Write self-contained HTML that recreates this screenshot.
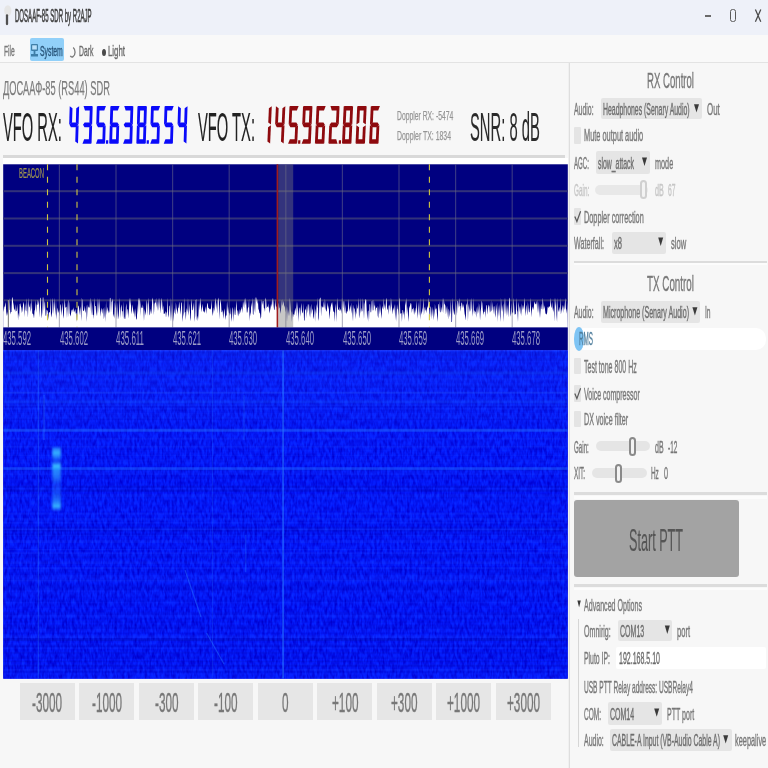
<!DOCTYPE html>
<html><head><meta charset="utf-8"><style>
html,body{margin:0;padding:0}
body{width:768px;height:768px;overflow:hidden;position:relative;background:#f7f7f7;font-family:"Liberation Sans",sans-serif}
.t{position:absolute;white-space:nowrap;line-height:1;transform-origin:0 0;-webkit-text-stroke-width:0.4px}
.r{position:absolute;box-sizing:border-box}
svg.r{box-sizing:content-box}
#wrap{position:absolute;left:0;top:0;width:768px;height:768px;overflow:hidden;background:#f7f7f7;filter:blur(0.35px)}
</style></head><body><div id="wrap">
<div class="r" style="left:0px;top:0px;width:768.00px;height:35.00px;background:#eef1f9;"></div>
<div class="r" style="left:0px;top:35px;width:768.00px;height:27.00px;background:#f9f9f9;"></div>
<div class="r" style="left:0px;top:61.5px;width:768.00px;height:1.50px;background:#e3e3e3;"></div>
<div class="r" style="left:568px;top:63px;width:1.20px;height:705.00px;background:#f0f0f0;"></div>
<div class="r" style="left:569.3px;top:63px;width:1.00px;height:705.00px;background:#dedede;"></div>
<svg class="r" style="left:0;top:0" width="40" height="35"><ellipse cx="7.8" cy="10.6" rx="3.6" ry="5.4" fill="#e6e6e6"/><path d="M7 15.5 L7 24" stroke="#505050" stroke-width="2.3" stroke-linecap="round"/></svg>
<div class="t" style="left:15.20px;top:8.00px;font-size:17.59px;transform:scaleX(0.3438);color:#404040;-webkit-text-stroke-width:0.6px;">DOSAAF-85 SDR by R2AJP</div>
<div class="r" style="left:704.5px;top:14.5px;width:6.30px;height:2.30px;background:#6a6a6a;"></div>
<div class="r" style="left:729.8px;top:9px;width:6.4px;height:13.2px;border:1.6px solid #5a5a5a;border-radius:2.5px"></div>
<svg class="r" style="left:754px;top:8px" width="8" height="15"><path d="M1.4 1.4 L6.8 13.8 M6.8 1.4 L1.4 13.8" stroke="#4a4a4a" stroke-width="1.25"/></svg>
<div class="t" style="left:4.40px;top:44.00px;font-size:14.83px;transform:scaleX(0.4522);color:#7a7a7a;">File</div>
<div class="r" style="left:30.1px;top:38.4px;width:33.90px;height:23.00px;background:#91d0f9;border-radius:2px;"></div>
<svg class="r" style="left:30px;top:43px" width="9" height="16"><rect x="1" y="1" width="7" height="7" rx="1" fill="#3f7fa8"/><rect x="2.2" y="2.3" width="4.6" height="4.2" fill="#b9e0fa"/><rect x="3.6" y="8" width="1.8" height="3" fill="#3f7fa8"/><rect x="1" y="11" width="7" height="2.5" fill="#3f7fa8"/></svg>
<div class="t" style="left:39.80px;top:44.00px;font-size:14.83px;transform:scaleX(0.4613);color:#28557a;">System</div>
<svg class="r" style="left:0;top:0" width="768" height="768"><path d="M73.2 47.6 C75.6 49.8 75.8 54.6 73 56.6 C72 57.3 70.8 57 70.4 55.8" fill="none" stroke="#7a7a7a" stroke-width="1.3"/></svg>
<div class="t" style="left:78.70px;top:44.00px;font-size:14.83px;transform:scaleX(0.4597);color:#6a6a6a;">Dark</div>
<div class="r" style="left:101.8px;top:48.8px;width:4px;height:7px;border-radius:50%;background:#4a4a4a"></div>
<div class="t" style="left:108.30px;top:44.00px;font-size:14.83px;transform:scaleX(0.5289);color:#6a6a6a;">Light</div>
<div class="t" style="left:3.10px;top:78.00px;font-size:20.93px;transform:scaleX(0.4443);color:#7c7c7c;-webkit-text-stroke-width:0.25px;">ДОСААФ-85 (RS44) SDR</div>
<div class="t" style="left:3.40px;top:108.00px;font-size:40.12px;transform:scaleX(0.3663);color:#222222;-webkit-text-stroke-width:0.15px;">VFO RX:</div>
<div class="t" style="left:197.50px;top:108.00px;font-size:40.12px;transform:scaleX(0.3671);color:#222222;-webkit-text-stroke-width:0.15px;">VFO TX:</div>
<div class="t" style="left:397.00px;top:109.00px;font-size:13.37px;transform:scaleX(0.5084);color:#959595;-webkit-text-stroke-width:0.25px;">Doppler RX: -5474</div>
<div class="t" style="left:397.20px;top:129.00px;font-size:13.37px;transform:scaleX(0.5174);color:#959595;-webkit-text-stroke-width:0.25px;">Doppler TX: 1834</div>
<div class="t" style="left:470.40px;top:108.00px;font-size:39.83px;transform:scaleX(0.3710);color:#2a2a2a;-webkit-text-stroke-width:0.1px;">SNR: 8 dB</div>
<svg class="r" style="left:0;top:0" width="768" height="768" fill="#0a0afa"><polygon points="69.73,106.20 72.47,108.27 72.04,122.48 69.18,124.55"/><polygon points="69.47,124.85 71.08,122.55 76.80,122.55 78.27,124.85 76.66,127.15 70.94,127.15"/><polygon points="79.13,106.20 78.58,124.55 75.84,122.48 76.27,108.27"/><polygon points="78.56,125.15 78.01,143.50 75.27,141.43 75.70,127.22"/><polygon points="83.59,105.90 92.39,105.90 90.71,110.50 84.99,110.50"/><polygon points="92.68,106.20 92.13,124.55 89.39,122.48 89.82,108.27"/><polygon points="83.02,124.85 84.63,122.55 90.35,122.55 91.82,124.85 90.21,127.15 84.49,127.15"/><polygon points="92.11,125.15 91.56,143.50 88.82,141.43 89.25,127.22"/><polygon points="84.13,139.20 89.85,139.20 91.25,143.80 82.45,143.80"/><polygon points="97.14,105.90 105.94,105.90 104.26,110.50 98.54,110.50"/><polygon points="96.83,106.20 99.57,108.27 99.14,122.48 96.28,124.55"/><polygon points="96.57,124.85 98.18,122.55 103.90,122.55 105.37,124.85 103.76,127.15 98.04,127.15"/><polygon points="105.66,125.15 105.11,143.50 102.37,141.43 102.80,127.22"/><polygon points="97.68,139.20 103.40,139.20 104.80,143.80 96.00,143.80"/><polygon points="106.06,140.20 108.26,140.20 108.15,143.80 105.95,143.80"/><polygon points="110.69,105.90 119.49,105.90 117.81,110.50 112.09,110.50"/><polygon points="110.38,106.20 113.12,108.27 112.69,122.48 109.83,124.55"/><polygon points="110.12,124.85 111.73,122.55 117.45,122.55 118.92,124.85 117.31,127.15 111.59,127.15"/><polygon points="109.81,125.15 112.55,127.22 112.12,141.43 109.26,143.50"/><polygon points="111.23,139.20 116.95,139.20 118.35,143.80 109.55,143.80"/><polygon points="119.21,125.15 118.66,143.50 115.92,141.43 116.35,127.22"/><polygon points="124.24,105.90 133.04,105.90 131.36,110.50 125.64,110.50"/><polygon points="133.33,106.20 132.78,124.55 130.04,122.48 130.47,108.27"/><polygon points="123.67,124.85 125.28,122.55 131.00,122.55 132.47,124.85 130.86,127.15 125.14,127.15"/><polygon points="132.76,125.15 132.21,143.50 129.47,141.43 129.90,127.22"/><polygon points="124.78,139.20 130.50,139.20 131.90,143.80 123.10,143.80"/><polygon points="137.79,105.90 146.59,105.90 144.91,110.50 139.19,110.50"/><polygon points="146.88,106.20 146.33,124.55 143.59,122.48 144.02,108.27"/><polygon points="146.31,125.15 145.76,143.50 143.02,141.43 143.45,127.22"/><polygon points="138.33,139.20 144.05,139.20 145.45,143.80 136.65,143.80"/><polygon points="136.91,125.15 139.65,127.22 139.22,141.43 136.36,143.50"/><polygon points="137.48,106.20 140.22,108.27 139.79,122.48 136.93,124.55"/><polygon points="137.22,124.85 138.83,122.55 144.55,122.55 146.02,124.85 144.41,127.15 138.69,127.15"/><polygon points="146.71,140.20 148.91,140.20 148.80,143.80 146.60,143.80"/><polygon points="151.34,105.90 160.14,105.90 158.46,110.50 152.74,110.50"/><polygon points="151.03,106.20 153.77,108.27 153.34,122.48 150.48,124.55"/><polygon points="150.77,124.85 152.38,122.55 158.10,122.55 159.57,124.85 157.96,127.15 152.24,127.15"/><polygon points="159.86,125.15 159.31,143.50 156.57,141.43 157.00,127.22"/><polygon points="151.88,139.20 157.60,139.20 159.00,143.80 150.20,143.80"/><polygon points="164.89,105.90 173.69,105.90 172.01,110.50 166.29,110.50"/><polygon points="164.58,106.20 167.32,108.27 166.89,122.48 164.03,124.55"/><polygon points="164.32,124.85 165.93,122.55 171.65,122.55 173.12,124.85 171.51,127.15 165.79,127.15"/><polygon points="173.41,125.15 172.86,143.50 170.12,141.43 170.55,127.22"/><polygon points="165.43,139.20 171.15,139.20 172.55,143.80 163.75,143.80"/><polygon points="178.13,106.20 180.87,108.27 180.44,122.48 177.58,124.55"/><polygon points="177.87,124.85 179.48,122.55 185.20,122.55 186.67,124.85 185.06,127.15 179.34,127.15"/><polygon points="187.53,106.20 186.98,124.55 184.24,122.48 184.67,108.27"/><polygon points="186.96,125.15 186.41,143.50 183.67,141.43 184.10,127.22"/></svg>
<svg class="r" style="left:0;top:0" width="768" height="768" fill="#8e0a0e"><polygon points="271.79,106.20 270.97,124.55 268.26,122.48 268.90,108.27"/><polygon points="270.94,125.15 270.11,143.50 267.41,141.43 268.05,127.22"/><polygon points="275.94,106.20 278.65,108.27 278.01,122.48 275.12,124.55"/><polygon points="275.40,124.85 277.05,122.55 282.77,122.55 284.20,124.85 282.56,127.15 276.84,127.15"/><polygon points="285.34,106.20 284.52,124.55 281.81,122.48 282.45,108.27"/><polygon points="284.49,125.15 283.66,143.50 280.96,141.43 281.60,127.22"/><polygon points="289.81,105.90 298.61,105.90 296.86,110.50 291.14,110.50"/><polygon points="289.49,106.20 292.20,108.27 291.56,122.48 288.67,124.55"/><polygon points="288.95,124.85 290.60,122.55 296.32,122.55 297.75,124.85 296.11,127.15 290.39,127.15"/><polygon points="298.04,125.15 297.21,143.50 294.51,141.43 295.15,127.22"/><polygon points="289.85,139.20 295.57,139.20 296.90,143.80 288.10,143.80"/><polygon points="298.21,140.20 300.41,140.20 300.25,143.80 298.05,143.80"/><polygon points="303.36,105.90 312.16,105.90 310.41,110.50 304.69,110.50"/><polygon points="312.44,106.20 311.62,124.55 308.91,122.48 309.55,108.27"/><polygon points="311.59,125.15 310.76,143.50 308.06,141.43 308.70,127.22"/><polygon points="303.40,139.20 309.12,139.20 310.45,143.80 301.65,143.80"/><polygon points="303.04,106.20 305.75,108.27 305.11,122.48 302.22,124.55"/><polygon points="302.50,124.85 304.15,122.55 309.87,122.55 311.30,124.85 309.66,127.15 303.94,127.15"/><polygon points="316.91,105.90 325.71,105.90 323.96,110.50 318.24,110.50"/><polygon points="316.59,106.20 319.30,108.27 318.66,122.48 315.77,124.55"/><polygon points="316.05,124.85 317.70,122.55 323.42,122.55 324.85,124.85 323.21,127.15 317.49,127.15"/><polygon points="315.74,125.15 318.45,127.22 317.81,141.43 314.91,143.50"/><polygon points="316.95,139.20 322.67,139.20 324.00,143.80 315.20,143.80"/><polygon points="325.14,125.15 324.31,143.50 321.61,141.43 322.25,127.22"/><polygon points="330.46,105.90 339.26,105.90 337.51,110.50 331.79,110.50"/><polygon points="339.54,106.20 338.72,124.55 336.01,122.48 336.65,108.27"/><polygon points="329.60,124.85 331.25,122.55 336.97,122.55 338.40,124.85 336.76,127.15 331.04,127.15"/><polygon points="329.29,125.15 332.00,127.22 331.36,141.43 328.46,143.50"/><polygon points="330.50,139.20 336.22,139.20 337.55,143.80 328.75,143.80"/><polygon points="338.86,140.20 341.06,140.20 340.90,143.80 338.70,143.80"/><polygon points="344.01,105.90 352.81,105.90 351.06,110.50 345.34,110.50"/><polygon points="353.09,106.20 352.27,124.55 349.56,122.48 350.20,108.27"/><polygon points="352.24,125.15 351.41,143.50 348.71,141.43 349.35,127.22"/><polygon points="344.05,139.20 349.77,139.20 351.10,143.80 342.30,143.80"/><polygon points="342.84,125.15 345.55,127.22 344.91,141.43 342.01,143.50"/><polygon points="343.69,106.20 346.40,108.27 345.76,122.48 342.87,124.55"/><polygon points="343.15,124.85 344.80,122.55 350.52,122.55 351.95,124.85 350.31,127.15 344.59,127.15"/><polygon points="357.56,105.90 366.36,105.90 364.61,110.50 358.89,110.50"/><polygon points="366.64,106.20 365.82,124.55 363.11,122.48 363.75,108.27"/><polygon points="365.79,125.15 364.96,143.50 362.26,141.43 362.90,127.22"/><polygon points="357.60,139.20 363.32,139.20 364.65,143.80 355.85,143.80"/><polygon points="356.39,125.15 359.10,127.22 358.46,141.43 355.56,143.50"/><polygon points="357.24,106.20 359.95,108.27 359.31,122.48 356.42,124.55"/><polygon points="371.11,105.90 379.91,105.90 378.16,110.50 372.44,110.50"/><polygon points="370.79,106.20 373.50,108.27 372.86,122.48 369.97,124.55"/><polygon points="370.25,124.85 371.90,122.55 377.62,122.55 379.05,124.85 377.41,127.15 371.69,127.15"/><polygon points="369.94,125.15 372.65,127.22 372.01,141.43 369.11,143.50"/><polygon points="371.15,139.20 376.87,139.20 378.20,143.80 369.40,143.80"/><polygon points="379.34,125.15 378.51,143.50 375.81,141.43 376.45,127.22"/></svg>
<div class="r" style="left:3.3px;top:155.3px;width:561.70px;height:3.10px;background:#d9d9d9;"></div>
<div class="r" style="left:3.3px;top:158.4px;width:564.70px;height:5.90px;background:#ffffff;"></div>
<svg class="r" style="left:0;top:0" width="768" height="768"><rect x="3.2" y="164.3" width="564.5999999999999" height="163.2" fill="#000080"/><rect x="3.2" y="190.2" width="564.5999999999999" height="2" fill="#32327a"/><rect x="3.2" y="217.5" width="564.5999999999999" height="2" fill="#32327a"/><rect x="3.2" y="244.8" width="564.5999999999999" height="2" fill="#32327a"/><rect x="3.2" y="272.1" width="564.5999999999999" height="2" fill="#32327a"/><rect x="3.2" y="299.3" width="564.5999999999999" height="2" fill="#32327a"/><polygon fill="#ffffff" points="3.20,327.50 3.20,306.71 3.75,312.08 4.30,306.92 4.85,306.29 5.40,301.99 5.95,307.01 6.50,316.28 7.05,311.47 7.60,315.76 8.15,310.24 8.70,311.26 9.25,309.80 9.80,297.50 10.35,314.49 10.90,312.04 11.45,311.99 12.00,297.50 12.55,297.50 13.10,302.27 13.65,305.22 14.20,310.64 14.75,308.18 15.30,312.15 15.85,304.00 16.40,310.66 16.95,311.26 17.50,303.87 18.05,320.52 18.60,312.40 19.15,316.88 19.70,304.16 20.25,303.32 20.80,306.09 21.35,307.76 21.90,312.92 22.45,310.24 23.00,305.37 23.55,301.80 24.10,304.86 24.65,317.05 25.20,302.84 25.75,310.21 26.30,311.49 26.85,298.07 27.40,308.84 27.95,317.64 28.50,297.50 29.05,306.25 29.60,307.76 30.15,302.78 30.70,311.98 31.25,308.06 31.80,298.25 32.35,314.29 32.90,313.19 33.45,315.12 34.00,318.58 34.55,311.04 35.10,309.33 35.65,299.41 36.20,312.81 36.75,304.22 37.30,305.33 37.85,299.65 38.40,301.73 38.95,304.78 39.50,317.52 40.05,297.50 40.60,298.30 41.15,310.18 41.70,318.60 42.25,312.55 42.80,297.50 43.35,297.50 43.90,311.00 44.45,303.35 45.00,300.66 45.55,315.34 46.10,316.21 46.65,309.60 47.20,310.22 47.75,311.54 48.30,319.66 48.85,312.83 49.40,312.13 49.95,312.33 50.50,297.52 51.05,317.47 51.60,315.19 52.15,312.21 52.70,297.50 53.25,304.06 53.80,314.40 54.35,297.50 54.90,307.21 55.45,315.64 56.00,299.32 56.55,319.77 57.10,312.36 57.65,307.45 58.20,310.77 58.75,313.05 59.30,309.34 59.85,316.52 60.40,303.87 60.95,305.60 61.50,315.79 62.05,308.69 62.60,302.34 63.15,315.13 63.70,318.76 64.25,305.39 64.80,298.84 65.35,307.56 65.90,307.46 66.45,306.41 67.00,318.33 67.55,301.31 68.10,317.32 68.65,299.62 69.20,302.99 69.75,312.92 70.30,316.40 70.85,314.51 71.40,310.92 71.95,309.50 72.50,309.57 73.05,312.53 73.60,307.27 74.15,310.44 74.70,312.51 75.25,308.51 75.80,313.85 76.35,312.46 76.90,322.00 77.45,310.77 78.00,305.51 78.55,305.89 79.10,308.41 79.65,314.97 80.20,306.14 80.75,311.20 81.30,321.36 81.85,297.50 82.40,300.63 82.95,310.21 83.50,311.29 84.05,310.17 84.60,305.48 85.15,313.09 85.70,310.47 86.25,304.85 86.80,322.00 87.35,310.99 87.90,304.62 88.45,307.80 89.00,306.92 89.55,308.06 90.10,297.50 90.65,305.09 91.20,315.56 91.75,300.32 92.30,308.03 92.85,315.17 93.40,314.49 93.95,318.94 94.50,297.50 95.05,306.03 95.60,306.11 96.15,312.86 96.70,316.14 97.25,297.50 97.80,316.12 98.35,298.37 98.90,313.28 99.45,298.06 100.00,309.73 100.55,316.86 101.10,307.45 101.65,309.84 102.20,314.08 102.75,309.49 103.30,307.88 103.85,319.23 104.40,315.84 104.95,306.44 105.50,322.00 106.05,300.47 106.60,314.90 107.15,306.64 107.70,309.43 108.25,313.44 108.80,310.06 109.35,312.97 109.90,297.81 110.45,297.93 111.00,312.80 111.55,301.76 112.10,301.31 112.65,298.21 113.20,317.36 113.75,313.73 114.30,318.81 114.85,301.94 115.40,308.51 115.95,300.52 116.50,313.86 117.05,319.63 117.60,302.27 118.15,319.42 118.70,315.42 119.25,307.26 119.80,297.50 120.35,318.35 120.90,307.83 121.45,304.28 122.00,311.30 122.55,311.37 123.10,318.99 123.65,301.36 124.20,316.45 124.75,318.91 125.30,318.67 125.85,307.24 126.40,303.29 126.95,315.63 127.50,309.31 128.05,309.37 128.60,318.47 129.15,306.66 129.70,297.50 130.25,305.79 130.80,297.50 131.35,314.23 131.90,310.72 132.45,304.22 133.00,308.43 133.55,314.33 134.10,309.05 134.65,317.79 135.20,308.07 135.75,315.78 136.30,318.94 136.85,319.77 137.40,303.80 137.95,314.66 138.50,297.50 139.05,300.92 139.60,297.50 140.15,315.98 140.70,299.88 141.25,308.41 141.80,307.15 142.35,308.30 142.90,304.36 143.45,310.14 144.00,321.04 144.55,308.81 145.10,312.22 145.65,315.50 146.20,307.11 146.75,299.68 147.30,304.61 147.85,316.02 148.40,297.50 148.95,304.32 149.50,315.55 150.05,314.05 150.60,308.55 151.15,314.14 151.70,309.66 152.25,300.25 152.80,297.55 153.35,304.03 153.90,314.96 154.45,304.54 155.00,302.18 155.55,303.10 156.10,297.78 156.65,307.68 157.20,300.24 157.75,311.05 158.30,297.50 158.85,310.79 159.40,304.01 159.95,297.50 160.50,313.57 161.05,306.57 161.60,297.50 162.15,302.37 162.70,310.54 163.25,305.29 163.80,313.96 164.35,313.73 164.90,313.16 165.45,310.79 166.00,317.84 166.55,313.12 167.10,311.66 167.65,297.50 168.20,314.78 168.75,317.67 169.30,306.42 169.85,305.21 170.40,322.00 170.95,297.50 171.50,311.78 172.05,322.00 172.60,302.01 173.15,313.33 173.70,321.70 174.25,307.66 174.80,312.43 175.35,314.82 175.90,302.16 176.45,307.88 177.00,310.55 177.55,314.28 178.10,308.26 178.65,307.13 179.20,301.39 179.75,305.99 180.30,314.74 180.85,309.21 181.40,302.53 181.95,302.61 182.50,322.00 183.05,316.48 183.60,312.96 184.15,297.50 184.70,312.85 185.25,311.86 185.80,320.29 186.35,311.49 186.90,308.03 187.45,312.16 188.00,297.50 188.55,315.73 189.10,310.77 189.65,303.59 190.20,317.78 190.75,321.17 191.30,298.68 191.85,303.84 192.40,310.54 192.95,309.78 193.50,305.71 194.05,301.68 194.60,322.00 195.15,315.76 195.70,300.14 196.25,299.08 196.80,320.42 197.35,315.42 197.90,321.25 198.45,314.17 199.00,302.40 199.55,310.32 200.10,297.50 200.65,303.26 201.20,308.09 201.75,312.16 202.30,303.41 202.85,307.63 203.40,311.71 203.95,311.14 204.50,312.97 205.05,309.96 205.60,306.23 206.15,314.02 206.70,308.85 207.25,302.72 207.80,304.12 208.35,308.50 208.90,307.73 209.45,309.60 210.00,308.50 210.55,309.73 211.10,307.56 211.65,299.69 212.20,311.45 212.75,315.88 213.30,311.54 213.85,307.18 214.40,311.63 214.95,301.74 215.50,297.50 216.05,308.92 216.60,301.99 217.15,313.68 217.70,300.91 218.25,297.50 218.80,301.22 219.35,319.55 219.90,305.83 220.45,298.91 221.00,303.16 221.55,312.15 222.10,311.98 222.65,309.74 223.20,318.89 223.75,313.45 224.30,308.35 224.85,312.68 225.40,320.08 225.95,315.30 226.50,315.67 227.05,300.92 227.60,307.46 228.15,313.61 228.70,306.42 229.25,315.98 229.80,312.67 230.35,314.86 230.90,307.01 231.45,322.00 232.00,317.18 232.55,306.99 233.10,309.13 233.65,322.00 234.20,306.10 234.75,314.62 235.30,315.36 235.85,308.55 236.40,300.33 236.95,309.81 237.50,311.02 238.05,316.41 238.60,313.98 239.15,308.67 239.70,314.48 240.25,312.28 240.80,309.94 241.35,308.89 241.90,306.80 242.45,313.30 243.00,301.12 243.55,304.10 244.10,308.53 244.65,298.25 245.20,305.45 245.75,297.50 246.30,303.72 246.85,312.48 247.40,312.46 247.95,308.12 248.50,306.88 249.05,298.58 249.60,321.29 250.15,312.11 250.70,316.15 251.25,302.32 251.80,307.20 252.35,297.50 252.90,313.96 253.45,315.05 254.00,297.50 254.55,308.14 255.10,312.91 255.65,297.50 256.20,297.50 256.75,301.04 257.30,304.10 257.85,298.68 258.40,308.72 258.95,310.25 259.50,312.94 260.05,313.41 260.60,319.02 261.15,316.65 261.70,299.32 262.25,304.96 262.80,301.08 263.35,300.96 263.90,307.93 264.45,308.54 265.00,311.93 265.55,297.50 266.10,299.84 266.65,308.34 267.20,307.10 267.75,306.32 268.30,308.06 268.85,303.18 269.40,313.41 269.95,310.98 270.50,307.89 271.05,303.80 271.60,307.28 272.15,297.50 272.70,301.63 273.25,308.76 273.80,297.97 274.35,309.90 274.90,309.53 275.45,298.86 276.00,306.75 276.55,306.30 277.10,311.72 277.65,312.78 278.20,308.25 278.75,302.54 279.30,307.49 279.85,308.04 280.40,313.64 280.95,310.56 281.50,303.44 282.05,299.02 282.60,305.89 283.15,303.32 283.70,300.72 284.25,307.69 284.80,305.06 285.35,309.24 285.90,312.16 286.45,305.61 287.00,322.00 287.55,306.25 288.10,316.21 288.65,309.35 289.20,316.31 289.75,297.50 290.30,303.24 290.85,310.23 291.40,312.72 291.95,322.00 292.50,310.76 293.05,317.46 293.60,313.87 294.15,315.13 294.70,312.07 295.25,307.41 295.80,312.06 296.35,300.95 296.90,316.77 297.45,301.38 298.00,310.24 298.55,322.00 299.10,306.94 299.65,308.64 300.20,316.64 300.75,308.68 301.30,302.85 301.85,310.31 302.40,312.57 302.95,313.47 303.50,303.09 304.05,320.77 304.60,320.17 305.15,308.63 305.70,310.38 306.25,305.50 306.80,318.40 307.35,303.57 307.90,313.22 308.45,305.14 309.00,303.64 309.55,313.53 310.10,317.84 310.65,308.43 311.20,303.76 311.75,314.18 312.30,308.15 312.85,310.67 313.40,319.16 313.95,316.42 314.50,304.86 315.05,322.00 315.60,308.52 316.15,314.00 316.70,303.97 317.25,308.19 317.80,297.50 318.35,321.01 318.90,318.06 319.45,299.99 320.00,297.96 320.55,297.50 321.10,316.73 321.65,305.28 322.20,308.08 322.75,306.31 323.30,307.65 323.85,300.88 324.40,308.67 324.95,298.43 325.50,308.00 326.05,310.66 326.60,311.77 327.15,306.88 327.70,302.17 328.25,309.62 328.80,305.11 329.35,319.46 329.90,313.87 330.45,307.69 331.00,305.20 331.55,303.58 332.10,301.94 332.65,306.03 333.20,310.56 333.75,312.11 334.30,312.48 334.85,322.00 335.40,303.57 335.95,308.59 336.50,322.00 337.05,297.50 337.60,304.85 338.15,309.69 338.70,309.58 339.25,311.36 339.80,306.83 340.35,311.06 340.90,308.87 341.45,313.90 342.00,297.50 342.55,302.30 343.10,308.48 343.65,301.28 344.20,301.19 344.75,312.89 345.30,303.95 345.85,312.94 346.40,313.72 346.95,310.65 347.50,312.06 348.05,307.77 348.60,298.64 349.15,308.29 349.70,311.68 350.25,304.79 350.80,307.80 351.35,313.74 351.90,302.35 352.45,312.98 353.00,321.54 353.55,304.62 354.10,309.53 354.65,307.45 355.20,319.28 355.75,310.71 356.30,314.78 356.85,303.67 357.40,308.39 357.95,308.43 358.50,297.50 359.05,318.59 359.60,314.80 360.15,297.50 360.70,313.71 361.25,307.58 361.80,311.64 362.35,311.07 362.90,298.01 363.45,307.02 364.00,318.95 364.55,304.48 365.10,301.34 365.65,298.98 366.20,299.95 366.75,310.85 367.30,320.35 367.85,311.51 368.40,310.22 368.95,322.00 369.50,304.86 370.05,303.78 370.60,312.20 371.15,312.34 371.70,301.40 372.25,300.31 372.80,310.54 373.35,310.23 373.90,299.35 374.45,307.08 375.00,304.70 375.55,311.72 376.10,307.68 376.65,307.90 377.20,306.03 377.75,315.87 378.30,318.24 378.85,305.93 379.40,314.42 379.95,303.20 380.50,309.00 381.05,313.75 381.60,319.10 382.15,305.82 382.70,307.98 383.25,309.87 383.80,298.01 384.35,308.61 384.90,303.77 385.45,311.10 386.00,300.59 386.55,297.50 387.10,308.77 387.65,310.32 388.20,304.66 388.75,314.72 389.30,306.59 389.85,304.26 390.40,311.84 390.95,297.52 391.50,303.76 392.05,308.35 392.60,314.44 393.15,307.36 393.70,310.66 394.25,303.91 394.80,310.61 395.35,320.14 395.90,303.70 396.45,322.00 397.00,303.99 397.55,308.62 398.10,309.71 398.65,315.67 399.20,299.84 399.75,297.50 400.30,312.74 400.85,314.07 401.40,312.87 401.95,322.00 402.50,309.93 403.05,310.28 403.60,315.00 404.15,311.08 404.70,320.15 405.25,299.83 405.80,305.87 406.35,297.50 406.90,314.19 407.45,305.89 408.00,314.97 408.55,322.00 409.10,308.46 409.65,306.72 410.20,305.00 410.75,302.63 411.30,304.09 411.85,312.97 412.40,308.76 412.95,308.96 413.50,307.29 414.05,314.90 414.60,311.96 415.15,307.51 415.70,313.15 416.25,307.44 416.80,300.43 417.35,318.69 417.90,311.76 418.45,301.80 419.00,316.05 419.55,310.91 420.10,297.55 420.65,319.77 421.20,310.83 421.75,314.74 422.30,309.88 422.85,307.45 423.40,297.66 423.95,315.30 424.50,308.71 425.05,306.49 425.60,310.96 426.15,309.05 426.70,313.23 427.25,305.90 427.80,308.24 428.35,297.50 428.90,305.54 429.45,313.23 430.00,317.86 430.55,305.95 431.10,307.65 431.65,319.58 432.20,306.22 432.75,313.64 433.30,320.25 433.85,308.78 434.40,317.09 434.95,303.53 435.50,309.95 436.05,307.96 436.60,309.30 437.15,316.41 437.70,322.00 438.25,303.84 438.80,304.47 439.35,311.98 439.90,301.11 440.45,311.98 441.00,312.50 441.55,306.56 442.10,312.22 442.65,297.65 443.20,313.82 443.75,297.69 444.30,303.62 444.85,304.61 445.40,305.69 445.95,314.51 446.50,309.07 447.05,305.72 447.60,312.30 448.15,319.57 448.70,308.54 449.25,311.06 449.80,317.18 450.35,310.37 450.90,299.51 451.45,322.00 452.00,322.00 452.55,297.50 453.10,308.23 453.65,311.42 454.20,315.26 454.75,313.18 455.30,306.59 455.85,301.12 456.40,309.22 456.95,315.73 457.50,300.87 458.05,301.31 458.60,308.33 459.15,297.50 459.70,306.68 460.25,305.44 460.80,311.66 461.35,303.59 461.90,302.33 462.45,305.74 463.00,308.15 463.55,303.85 464.10,308.58 464.65,313.75 465.20,316.80 465.75,320.43 466.30,303.02 466.85,305.56 467.40,297.50 467.95,321.80 468.50,303.43 469.05,308.27 469.60,312.16 470.15,298.99 470.70,311.75 471.25,308.32 471.80,297.50 472.35,310.54 472.90,316.86 473.45,297.50 474.00,314.15 474.55,309.96 475.10,311.82 475.65,311.59 476.20,317.63 476.75,306.93 477.30,314.62 477.85,305.63 478.40,313.60 478.95,302.80 479.50,307.74 480.05,320.62 480.60,311.62 481.15,307.39 481.70,300.49 482.25,302.97 482.80,309.86 483.35,315.08 483.90,311.48 484.45,312.17 485.00,308.21 485.55,317.96 486.10,305.76 486.65,304.65 487.20,314.72 487.75,308.95 488.30,306.55 488.85,304.47 489.40,306.70 489.95,312.86 490.50,310.98 491.05,300.03 491.60,311.48 492.15,309.75 492.70,301.50 493.25,313.91 493.80,306.54 494.35,306.15 494.90,314.07 495.45,317.74 496.00,303.68 496.55,311.57 497.10,302.37 497.65,322.00 498.20,305.04 498.75,316.86 499.30,303.97 499.85,314.18 500.40,322.00 500.95,297.50 501.50,305.46 502.05,312.00 502.60,307.85 503.15,303.82 503.70,322.00 504.25,309.06 504.80,297.50 505.35,314.48 505.90,297.50 506.45,316.56 507.00,304.46 507.55,309.51 508.10,317.33 508.65,309.33 509.20,298.76 509.75,297.50 510.30,316.78 510.85,313.68 511.40,302.79 511.95,314.52 512.50,311.98 513.05,313.03 513.60,297.50 514.15,306.39 514.70,314.80 515.25,313.63 515.80,314.67 516.35,297.50 516.90,309.68 517.45,311.95 518.00,322.00 518.55,301.82 519.10,306.20 519.65,308.75 520.20,314.70 520.75,305.40 521.30,316.53 521.85,302.98 522.40,310.37 522.95,304.81 523.50,309.61 524.05,303.66 524.60,297.50 525.15,316.15 525.70,310.62 526.25,304.59 526.80,309.91 527.35,315.43 527.90,301.66 528.45,307.73 529.00,312.27 529.55,312.18 530.10,306.15 530.65,297.50 531.20,317.20 531.75,310.80 532.30,308.59 532.85,306.55 533.40,310.34 533.95,305.52 534.50,301.33 535.05,303.32 535.60,304.32 536.15,304.21 536.70,300.39 537.25,312.95 537.80,299.33 538.35,313.12 538.90,301.40 539.45,310.97 540.00,318.12 540.55,309.92 541.10,303.38 541.65,308.84 542.20,309.54 542.75,297.50 543.30,304.25 543.85,309.64 544.40,305.22 544.95,309.06 545.50,313.64 546.05,313.87 546.60,314.84 547.15,312.62 547.70,306.48 548.25,308.37 548.80,306.60 549.35,306.31 549.90,307.24 550.45,297.50 551.00,306.17 551.55,308.33 552.10,301.68 552.65,308.33 553.20,312.11 553.75,307.35 554.30,322.00 554.85,297.50 555.40,307.06 555.95,297.50 556.50,315.36 557.05,322.00 557.60,297.50 558.15,309.40 558.70,312.13 559.25,306.38 559.80,312.36 560.35,297.50 560.90,314.46 561.45,311.10 562.00,308.66 562.55,304.39 563.10,312.97 563.65,305.10 564.20,310.06 564.75,304.93 565.30,297.50 565.85,308.28 566.40,309.92 566.95,313.78 567.50,302.37 567.80,327.50"/><rect x="58.8" y="164.3" width="1.2" height="163.2" fill="#6a6a8a" opacity="0.5"/><rect x="115.4" y="164.3" width="1.2" height="163.2" fill="#6a6a8a" opacity="0.5"/><rect x="172.0" y="164.3" width="1.2" height="163.2" fill="#6a6a8a" opacity="0.5"/><rect x="228.60000000000002" y="164.3" width="1.2" height="163.2" fill="#6a6a8a" opacity="0.5"/><rect x="285.2" y="164.3" width="1.2" height="163.2" fill="#6a6a8a" opacity="0.5"/><rect x="341.79999999999995" y="164.3" width="1.2" height="163.2" fill="#6a6a8a" opacity="0.5"/><rect x="398.4" y="164.3" width="1.2" height="163.2" fill="#6a6a8a" opacity="0.5"/><rect x="454.99999999999994" y="164.3" width="1.2" height="163.2" fill="#6a6a8a" opacity="0.5"/><rect x="511.6" y="164.3" width="1.2" height="163.2" fill="#6a6a8a" opacity="0.5"/><rect x="7.8" y="300" width="1.2" height="27.5" fill="#8a8a8a"/><line x1="47.5" y1="164.3" x2="47.5" y2="327.5" stroke="#cfc640" stroke-width="1.1" stroke-dasharray="6,6.5"/><line x1="77.0" y1="164.3" x2="77.0" y2="327.5" stroke="#cfc640" stroke-width="1.1" stroke-dasharray="6,6.5"/><line x1="429.4" y1="164.3" x2="429.4" y2="327.5" stroke="#cfc640" stroke-width="1.1" stroke-dasharray="6,6.5"/><rect x="278.2" y="164.3" width="15" height="163.2" fill="#7a7a7a" opacity="0.42"/><rect x="276.6" y="164.3" width="1.6" height="163.2" fill="#a01c1c"/><rect x="3.2" y="327.5" width="564.5999999999999" height="22.69999999999999" fill="#000080"/></svg>
<div class="t" style="left:19.20px;top:166.00px;font-size:14.24px;transform:scaleX(0.4156);color:#9c9250;-webkit-text-stroke-width:0.2px;">BEACON</div>
<div class="t" style="left:2.90px;top:329.00px;font-size:19.48px;transform:scaleX(0.3977);color:#9c9cc6;-webkit-text-stroke-width:0;">435.592</div>
<div class="t" style="left:59.50px;top:329.00px;font-size:19.48px;transform:scaleX(0.3977);color:#9c9cc6;-webkit-text-stroke-width:0;">435.602</div>
<div class="t" style="left:116.10px;top:329.00px;font-size:19.48px;transform:scaleX(0.4060);color:#9c9cc6;-webkit-text-stroke-width:0;">435.611</div>
<div class="t" style="left:172.70px;top:329.00px;font-size:19.48px;transform:scaleX(0.3977);color:#9c9cc6;-webkit-text-stroke-width:0;">435.621</div>
<div class="t" style="left:229.30px;top:329.00px;font-size:19.48px;transform:scaleX(0.3977);color:#9c9cc6;-webkit-text-stroke-width:0;">435.630</div>
<div class="t" style="left:285.90px;top:329.00px;font-size:19.48px;transform:scaleX(0.3977);color:#9c9cc6;-webkit-text-stroke-width:0;">435.640</div>
<div class="t" style="left:342.50px;top:329.00px;font-size:19.48px;transform:scaleX(0.3977);color:#9c9cc6;-webkit-text-stroke-width:0;">435.650</div>
<div class="t" style="left:399.10px;top:329.00px;font-size:19.48px;transform:scaleX(0.3977);color:#9c9cc6;-webkit-text-stroke-width:0;">435.659</div>
<div class="t" style="left:455.70px;top:329.00px;font-size:19.48px;transform:scaleX(0.3977);color:#9c9cc6;-webkit-text-stroke-width:0;">435.669</div>
<div class="t" style="left:512.30px;top:329.00px;font-size:19.48px;transform:scaleX(0.3977);color:#9c9cc6;-webkit-text-stroke-width:0;">435.678</div>
<svg class="r" style="left:0;top:0" width="768" height="768"><defs><filter id="nz" x="0" y="0" width="100%" height="100%" color-interpolation-filters="sRGB"><feTurbulence type="fractalNoise" baseFrequency="0.4 0.15" numOctaves="2" seed="3"/><feColorMatrix values="0.04 0 0 0 -0.005  0.24 0 0 0 -0.04  0.36 0 0 0 0.77  0 0 0 0 1"/></filter><clipPath id="wc"><rect x="3.2" y="350.2" width="564.6" height="328.5"/></clipPath></defs><g clip-path="url(#wc)"><rect x="3.2" y="350.2" width="564.5999999999999" height="328.50000000000006" fill="#0c1ee6"/><rect x="3.2" y="350.2" width="564.5999999999999" height="328.50000000000006" filter="url(#nz)" opacity="1"/><rect x="3.2" y="350.2" width="564.5999999999999" height="2" fill="#3070ff" opacity="0.092"/><rect x="3.2" y="352.2" width="564.5999999999999" height="2" fill="#000070" opacity="0.103"/><rect x="3.2" y="354.2" width="564.5999999999999" height="2" fill="#000070" opacity="0.093"/><rect x="3.2" y="356.2" width="564.5999999999999" height="1.5" fill="#000070" opacity="0.005"/><rect x="3.2" y="357.7" width="564.5999999999999" height="3" fill="#000070" opacity="0.095"/><rect x="3.2" y="360.7" width="564.5999999999999" height="1.5" fill="#3070ff" opacity="0.015"/><rect x="3.2" y="362.2" width="564.5999999999999" height="1" fill="#000070" opacity="0.037"/><rect x="3.2" y="363.2" width="564.5999999999999" height="3" fill="#3070ff" opacity="0.013"/><rect x="3.2" y="366.2" width="564.5999999999999" height="1" fill="#000070" opacity="0.058"/><rect x="3.2" y="367.2" width="564.5999999999999" height="2" fill="#000070" opacity="0.040"/><rect x="3.2" y="369.2" width="564.5999999999999" height="3" fill="#000070" opacity="0.057"/><rect x="3.2" y="372.2" width="564.5999999999999" height="3" fill="#000070" opacity="0.079"/><rect x="3.2" y="375.2" width="564.5999999999999" height="1" fill="#3070ff" opacity="0.042"/><rect x="3.2" y="376.2" width="564.5999999999999" height="1.5" fill="#3070ff" opacity="0.017"/><rect x="3.2" y="377.7" width="564.5999999999999" height="3" fill="#3070ff" opacity="0.077"/><rect x="3.2" y="380.7" width="564.5999999999999" height="2" fill="#3070ff" opacity="0.015"/><rect x="3.2" y="382.7" width="564.5999999999999" height="3" fill="#3070ff" opacity="0.046"/><rect x="3.2" y="385.7" width="564.5999999999999" height="2" fill="#000070" opacity="0.071"/><rect x="3.2" y="387.7" width="564.5999999999999" height="2" fill="#3070ff" opacity="0.029"/><rect x="3.2" y="389.7" width="564.5999999999999" height="2" fill="#3070ff" opacity="0.001"/><rect x="3.2" y="391.7" width="564.5999999999999" height="2" fill="#3070ff" opacity="0.231"/><rect x="3.2" y="393.7" width="564.5999999999999" height="1" fill="#000070" opacity="0.003"/><rect x="3.2" y="394.7" width="564.5999999999999" height="2" fill="#000070" opacity="0.020"/><rect x="3.2" y="396.7" width="564.5999999999999" height="2" fill="#3070ff" opacity="0.046"/><rect x="3.2" y="398.7" width="564.5999999999999" height="1" fill="#3070ff" opacity="0.108"/><rect x="3.2" y="399.7" width="564.5999999999999" height="2" fill="#3070ff" opacity="0.051"/><rect x="3.2" y="401.7" width="564.5999999999999" height="1" fill="#3070ff" opacity="0.039"/><rect x="3.2" y="402.7" width="564.5999999999999" height="1" fill="#000070" opacity="0.057"/><rect x="3.2" y="403.7" width="564.5999999999999" height="1" fill="#3070ff" opacity="0.036"/><rect x="3.2" y="404.7" width="564.5999999999999" height="1" fill="#3070ff" opacity="0.156"/><rect x="3.2" y="405.7" width="564.5999999999999" height="2" fill="#000070" opacity="0.078"/><rect x="3.2" y="407.7" width="564.5999999999999" height="2" fill="#3070ff" opacity="0.078"/><rect x="3.2" y="409.7" width="564.5999999999999" height="1" fill="#000070" opacity="0.043"/><rect x="3.2" y="410.7" width="564.5999999999999" height="2" fill="#000070" opacity="0.019"/><rect x="3.2" y="412.7" width="564.5999999999999" height="2" fill="#3070ff" opacity="0.054"/><rect x="3.2" y="414.7" width="564.5999999999999" height="2" fill="#3070ff" opacity="0.033"/><rect x="3.2" y="416.7" width="564.5999999999999" height="1" fill="#3070ff" opacity="0.073"/><rect x="3.2" y="417.7" width="564.5999999999999" height="1" fill="#3070ff" opacity="0.082"/><rect x="3.2" y="418.7" width="564.5999999999999" height="1" fill="#000070" opacity="0.079"/><rect x="3.2" y="419.7" width="564.5999999999999" height="3" fill="#3070ff" opacity="0.018"/><rect x="3.2" y="422.7" width="564.5999999999999" height="1.5" fill="#000070" opacity="0.043"/><rect x="3.2" y="424.2" width="564.5999999999999" height="1.5" fill="#3070ff" opacity="0.015"/><rect x="3.2" y="425.7" width="564.5999999999999" height="2" fill="#000070" opacity="0.022"/><rect x="3.2" y="427.7" width="564.5999999999999" height="2" fill="#000070" opacity="0.027"/><rect x="3.2" y="429.7" width="564.5999999999999" height="1.5" fill="#3070ff" opacity="0.140"/><rect x="3.2" y="431.2" width="564.5999999999999" height="3" fill="#3070ff" opacity="0.000"/><rect x="3.2" y="434.2" width="564.5999999999999" height="2" fill="#3070ff" opacity="0.014"/><rect x="3.2" y="436.2" width="564.5999999999999" height="1.5" fill="#000070" opacity="0.000"/><rect x="3.2" y="437.7" width="564.5999999999999" height="2" fill="#3070ff" opacity="0.095"/><rect x="3.2" y="439.7" width="564.5999999999999" height="3" fill="#000070" opacity="0.002"/><rect x="3.2" y="442.7" width="564.5999999999999" height="1" fill="#3070ff" opacity="0.038"/><rect x="3.2" y="443.7" width="564.5999999999999" height="2" fill="#3070ff" opacity="0.010"/><rect x="3.2" y="445.7" width="564.5999999999999" height="2" fill="#3070ff" opacity="0.096"/><rect x="3.2" y="447.7" width="564.5999999999999" height="2" fill="#3070ff" opacity="0.006"/><rect x="3.2" y="449.7" width="564.5999999999999" height="2" fill="#3070ff" opacity="0.027"/><rect x="3.2" y="451.7" width="564.5999999999999" height="3" fill="#3070ff" opacity="0.014"/><rect x="3.2" y="454.7" width="564.5999999999999" height="1.5" fill="#3070ff" opacity="0.067"/><rect x="3.2" y="456.2" width="564.5999999999999" height="3" fill="#3070ff" opacity="0.007"/><rect x="3.2" y="459.2" width="564.5999999999999" height="2" fill="#3070ff" opacity="0.065"/><rect x="3.2" y="461.2" width="564.5999999999999" height="3" fill="#3070ff" opacity="0.067"/><rect x="3.2" y="464.2" width="564.5999999999999" height="1.5" fill="#3070ff" opacity="0.030"/><rect x="3.2" y="465.7" width="564.5999999999999" height="1.5" fill="#000070" opacity="0.033"/><rect x="3.2" y="467.2" width="564.5999999999999" height="2" fill="#3070ff" opacity="0.108"/><rect x="3.2" y="469.2" width="564.5999999999999" height="1.5" fill="#000070" opacity="0.070"/><rect x="3.2" y="470.7" width="564.5999999999999" height="1.5" fill="#3070ff" opacity="0.054"/><rect x="3.2" y="472.2" width="564.5999999999999" height="3" fill="#3070ff" opacity="0.083"/><rect x="3.2" y="475.2" width="564.5999999999999" height="1.5" fill="#000070" opacity="0.027"/><rect x="3.2" y="476.7" width="564.5999999999999" height="2" fill="#000070" opacity="0.064"/><rect x="3.2" y="478.7" width="564.5999999999999" height="3" fill="#3070ff" opacity="0.019"/><rect x="3.2" y="481.7" width="564.5999999999999" height="1" fill="#3070ff" opacity="0.010"/><rect x="3.2" y="482.7" width="564.5999999999999" height="1" fill="#000070" opacity="0.054"/><rect x="3.2" y="483.7" width="564.5999999999999" height="2" fill="#000070" opacity="0.004"/><rect x="3.2" y="485.7" width="564.5999999999999" height="2" fill="#000070" opacity="0.133"/><rect x="3.2" y="487.7" width="564.5999999999999" height="2" fill="#3070ff" opacity="0.072"/><rect x="3.2" y="489.7" width="564.5999999999999" height="2" fill="#000070" opacity="0.160"/><rect x="3.2" y="491.7" width="564.5999999999999" height="1" fill="#000070" opacity="0.020"/><rect x="3.2" y="492.7" width="564.5999999999999" height="1.5" fill="#3070ff" opacity="0.012"/><rect x="3.2" y="494.2" width="564.5999999999999" height="3" fill="#3070ff" opacity="0.089"/><rect x="3.2" y="497.2" width="564.5999999999999" height="3" fill="#3070ff" opacity="0.043"/><rect x="3.2" y="500.2" width="564.5999999999999" height="1.5" fill="#3070ff" opacity="0.022"/><rect x="3.2" y="501.7" width="564.5999999999999" height="1" fill="#3070ff" opacity="0.065"/><rect x="3.2" y="502.7" width="564.5999999999999" height="1.5" fill="#3070ff" opacity="0.030"/><rect x="3.2" y="504.2" width="564.5999999999999" height="1" fill="#3070ff" opacity="0.055"/><rect x="3.2" y="505.2" width="564.5999999999999" height="3" fill="#3070ff" opacity="0.016"/><rect x="3.2" y="508.2" width="564.5999999999999" height="3" fill="#3070ff" opacity="0.030"/><rect x="3.2" y="511.2" width="564.5999999999999" height="1.5" fill="#000070" opacity="0.005"/><rect x="3.2" y="512.7" width="564.5999999999999" height="2" fill="#3070ff" opacity="0.102"/><rect x="3.2" y="514.7" width="564.5999999999999" height="3" fill="#000070" opacity="0.013"/><rect x="3.2" y="517.7" width="564.5999999999999" height="3" fill="#3070ff" opacity="0.088"/><rect x="3.2" y="520.7" width="564.5999999999999" height="1" fill="#000070" opacity="0.031"/><rect x="3.2" y="521.7" width="564.5999999999999" height="2" fill="#3070ff" opacity="0.092"/><rect x="3.2" y="523.7" width="564.5999999999999" height="1" fill="#000070" opacity="0.058"/><rect x="3.2" y="524.7" width="564.5999999999999" height="1" fill="#000070" opacity="0.023"/><rect x="3.2" y="525.7" width="564.5999999999999" height="1" fill="#000070" opacity="0.016"/><rect x="3.2" y="526.7" width="564.5999999999999" height="2" fill="#000070" opacity="0.113"/><rect x="3.2" y="528.7" width="564.5999999999999" height="1" fill="#3070ff" opacity="0.244"/><rect x="3.2" y="529.7" width="564.5999999999999" height="2" fill="#000070" opacity="0.110"/><rect x="3.2" y="531.7" width="564.5999999999999" height="1.5" fill="#000070" opacity="0.033"/><rect x="3.2" y="533.2" width="564.5999999999999" height="2" fill="#000070" opacity="0.064"/><rect x="3.2" y="535.2" width="564.5999999999999" height="1" fill="#3070ff" opacity="0.085"/><rect x="3.2" y="536.2" width="564.5999999999999" height="2" fill="#3070ff" opacity="0.016"/><rect x="3.2" y="538.2" width="564.5999999999999" height="2" fill="#000070" opacity="0.006"/><rect x="3.2" y="540.2" width="564.5999999999999" height="3" fill="#3070ff" opacity="0.103"/><rect x="3.2" y="543.2" width="564.5999999999999" height="2" fill="#3070ff" opacity="0.009"/><rect x="3.2" y="545.2" width="564.5999999999999" height="3" fill="#3070ff" opacity="0.027"/><rect x="3.2" y="548.2" width="564.5999999999999" height="1" fill="#3070ff" opacity="0.002"/><rect x="3.2" y="549.2" width="564.5999999999999" height="1" fill="#3070ff" opacity="0.144"/><rect x="3.2" y="550.2" width="564.5999999999999" height="2" fill="#000070" opacity="0.006"/><rect x="3.2" y="552.2" width="564.5999999999999" height="2" fill="#3070ff" opacity="0.099"/><rect x="3.2" y="554.2" width="564.5999999999999" height="2" fill="#000070" opacity="0.043"/><rect x="3.2" y="556.2" width="564.5999999999999" height="2" fill="#000070" opacity="0.085"/><rect x="3.2" y="558.2" width="564.5999999999999" height="3" fill="#3070ff" opacity="0.020"/><rect x="3.2" y="561.2" width="564.5999999999999" height="3" fill="#3070ff" opacity="0.093"/><rect x="3.2" y="564.2" width="564.5999999999999" height="2" fill="#3070ff" opacity="0.018"/><rect x="3.2" y="566.2" width="564.5999999999999" height="1" fill="#3070ff" opacity="0.013"/><rect x="3.2" y="567.2" width="564.5999999999999" height="2" fill="#3070ff" opacity="0.108"/><rect x="3.2" y="569.2" width="564.5999999999999" height="3" fill="#000070" opacity="0.043"/><rect x="3.2" y="572.2" width="564.5999999999999" height="1" fill="#000070" opacity="0.068"/><rect x="3.2" y="573.2" width="564.5999999999999" height="2" fill="#000070" opacity="0.033"/><rect x="3.2" y="575.2" width="564.5999999999999" height="1.5" fill="#3070ff" opacity="0.100"/><rect x="3.2" y="576.7" width="564.5999999999999" height="3" fill="#3070ff" opacity="0.074"/><rect x="3.2" y="579.7" width="564.5999999999999" height="2" fill="#3070ff" opacity="0.133"/><rect x="3.2" y="581.7" width="564.5999999999999" height="2" fill="#3070ff" opacity="0.048"/><rect x="3.2" y="583.7" width="564.5999999999999" height="2" fill="#000070" opacity="0.039"/><rect x="3.2" y="585.7" width="564.5999999999999" height="1.5" fill="#000070" opacity="0.084"/><rect x="3.2" y="587.2" width="564.5999999999999" height="1.5" fill="#000070" opacity="0.094"/><rect x="3.2" y="588.7" width="564.5999999999999" height="1.5" fill="#000070" opacity="0.069"/><rect x="3.2" y="590.2" width="564.5999999999999" height="2" fill="#3070ff" opacity="0.061"/><rect x="3.2" y="592.2" width="564.5999999999999" height="1.5" fill="#3070ff" opacity="0.054"/><rect x="3.2" y="593.7" width="564.5999999999999" height="1" fill="#3070ff" opacity="0.062"/><rect x="3.2" y="594.7" width="564.5999999999999" height="1" fill="#3070ff" opacity="0.054"/><rect x="3.2" y="595.7" width="564.5999999999999" height="1.5" fill="#000070" opacity="0.017"/><rect x="3.2" y="597.2" width="564.5999999999999" height="1" fill="#000070" opacity="0.053"/><rect x="3.2" y="598.2" width="564.5999999999999" height="1.5" fill="#3070ff" opacity="0.017"/><rect x="3.2" y="599.7" width="564.5999999999999" height="2" fill="#000070" opacity="0.063"/><rect x="3.2" y="601.7" width="564.5999999999999" height="2" fill="#3070ff" opacity="0.057"/><rect x="3.2" y="603.7" width="564.5999999999999" height="3" fill="#000070" opacity="0.026"/><rect x="3.2" y="606.7" width="564.5999999999999" height="1" fill="#3070ff" opacity="0.008"/><rect x="3.2" y="607.7" width="564.5999999999999" height="2" fill="#3070ff" opacity="0.014"/><rect x="3.2" y="609.7" width="564.5999999999999" height="2" fill="#000070" opacity="0.015"/><rect x="3.2" y="611.7" width="564.5999999999999" height="3" fill="#000070" opacity="0.062"/><rect x="3.2" y="614.7" width="564.5999999999999" height="3" fill="#3070ff" opacity="0.080"/><rect x="3.2" y="617.7" width="564.5999999999999" height="1" fill="#000070" opacity="0.045"/><rect x="3.2" y="618.7" width="564.5999999999999" height="1.5" fill="#000070" opacity="0.055"/><rect x="3.2" y="620.2" width="564.5999999999999" height="1" fill="#3070ff" opacity="0.007"/><rect x="3.2" y="621.2" width="564.5999999999999" height="1.5" fill="#000070" opacity="0.055"/><rect x="3.2" y="622.7" width="564.5999999999999" height="1" fill="#3070ff" opacity="0.034"/><rect x="3.2" y="623.7" width="564.5999999999999" height="1" fill="#000070" opacity="0.003"/><rect x="3.2" y="624.7" width="564.5999999999999" height="3" fill="#000070" opacity="0.071"/><rect x="3.2" y="627.7" width="564.5999999999999" height="1" fill="#000070" opacity="0.105"/><rect x="3.2" y="628.7" width="564.5999999999999" height="1.5" fill="#3070ff" opacity="0.025"/><rect x="3.2" y="630.2" width="564.5999999999999" height="1.5" fill="#3070ff" opacity="0.075"/><rect x="3.2" y="631.7" width="564.5999999999999" height="1" fill="#3070ff" opacity="0.003"/><rect x="3.2" y="632.7" width="564.5999999999999" height="1" fill="#000070" opacity="0.087"/><rect x="3.2" y="633.7" width="564.5999999999999" height="1.5" fill="#3070ff" opacity="0.018"/><rect x="3.2" y="635.2" width="564.5999999999999" height="3" fill="#3070ff" opacity="0.120"/><rect x="3.2" y="638.2" width="564.5999999999999" height="3" fill="#000070" opacity="0.180"/><rect x="3.2" y="641.2" width="564.5999999999999" height="1.5" fill="#000070" opacity="0.001"/><rect x="3.2" y="642.7" width="564.5999999999999" height="2" fill="#3070ff" opacity="0.063"/><rect x="3.2" y="644.7" width="564.5999999999999" height="1.5" fill="#000070" opacity="0.088"/><rect x="3.2" y="646.2" width="564.5999999999999" height="1" fill="#000070" opacity="0.125"/><rect x="3.2" y="647.2" width="564.5999999999999" height="2" fill="#3070ff" opacity="0.079"/><rect x="3.2" y="649.2" width="564.5999999999999" height="1.5" fill="#000070" opacity="0.044"/><rect x="3.2" y="650.7" width="564.5999999999999" height="1" fill="#3070ff" opacity="0.014"/><rect x="3.2" y="651.7" width="564.5999999999999" height="2" fill="#000070" opacity="0.097"/><rect x="3.2" y="653.7" width="564.5999999999999" height="3" fill="#000070" opacity="0.031"/><rect x="3.2" y="656.7" width="564.5999999999999" height="2" fill="#000070" opacity="0.099"/><rect x="3.2" y="658.7" width="564.5999999999999" height="1.5" fill="#3070ff" opacity="0.023"/><rect x="3.2" y="660.2" width="564.5999999999999" height="1" fill="#000070" opacity="0.023"/><rect x="3.2" y="661.2" width="564.5999999999999" height="1" fill="#000070" opacity="0.127"/><rect x="3.2" y="662.2" width="564.5999999999999" height="1.5" fill="#3070ff" opacity="0.003"/><rect x="3.2" y="663.7" width="564.5999999999999" height="1" fill="#3070ff" opacity="0.070"/><rect x="3.2" y="664.7" width="564.5999999999999" height="2" fill="#000070" opacity="0.120"/><rect x="3.2" y="666.7" width="564.5999999999999" height="2" fill="#000070" opacity="0.028"/><rect x="3.2" y="668.7" width="564.5999999999999" height="2" fill="#3070ff" opacity="0.116"/><rect x="3.2" y="670.7" width="564.5999999999999" height="2" fill="#000070" opacity="0.074"/><rect x="3.2" y="672.7" width="564.5999999999999" height="3" fill="#3070ff" opacity="0.066"/><rect x="3.2" y="675.7" width="564.5999999999999" height="3" fill="#3070ff" opacity="0.038"/><defs><linearGradient id="tg" x1="0" y1="0" x2="0" y2="1"><stop offset="0" stop-color="#3070ff" stop-opacity="0.14"/><stop offset="1" stop-color="#3070ff" stop-opacity="0"/></linearGradient></defs><rect x="3.2" y="350.2" width="564.5999999999999" height="110" fill="url(#tg)"/><rect x="3.2" y="428.8" width="564.5999999999999" height="3" fill="#2068ff" opacity="0.44000000000000006"/><rect x="3.2" y="467.2" width="564.5999999999999" height="3" fill="#2068ff" opacity="0.42000000000000004"/><rect x="3.2" y="400.5" width="564.5999999999999" height="3" fill="#2068ff" opacity="0.22"/><rect x="3.2" y="371.5" width="564.5999999999999" height="3" fill="#2068ff" opacity="0.2"/><rect x="37.8" y="350.2" width="1.2" height="328.50000000000006" fill="#2a78ff" opacity="0.32"/><rect x="282.2" y="350.2" width="1.8" height="328.50000000000006" fill="#2a78ff" opacity="0.55"/><rect x="212" y="350.2" width="1" height="328.50000000000006" fill="#2a78ff" opacity="0.2"/><path d="M185 570 L201 617 M206.6 633 L224 664" stroke="#2a78ff" stroke-width="1.2" opacity="0.45" fill="none"/><path d="M245.7 535 L245.7 572 M244 395 L244 440" stroke="#2a78ff" stroke-width="1.2" opacity="0.3" fill="none"/><rect x="43.5" y="395" width="1" height="45" fill="#3a8cff" opacity="0.4"/><defs><linearGradient id="bg1" x1="0" y1="0" x2="0" y2="1"><stop offset="0" stop-color="#1e5cff" stop-opacity="0.3"/><stop offset="0.03" stop-color="#2a90ff" stop-opacity="0.8"/><stop offset="0.1" stop-color="#36b4ff" stop-opacity="1.0"/><stop offset="0.17" stop-color="#2a90ff" stop-opacity="0.75"/><stop offset="0.22" stop-color="#1e60ff" stop-opacity="0.45"/><stop offset="0.3" stop-color="#3cc8ff" stop-opacity="1.0"/><stop offset="0.36" stop-color="#2a9cff" stop-opacity="0.85"/><stop offset="0.47" stop-color="#2a90ff" stop-opacity="0.75"/><stop offset="0.6" stop-color="#1e60ff" stop-opacity="0.45"/><stop offset="0.72" stop-color="#2070ff" stop-opacity="0.55"/><stop offset="0.84" stop-color="#2a90ff" stop-opacity="0.75"/><stop offset="0.93" stop-color="#36b8ff" stop-opacity="1.0"/><stop offset="1" stop-color="#1e5cff" stop-opacity="0.4"/></linearGradient><filter id="bl1" x="-50%" y="-10%" width="200%" height="120%"><feGaussianBlur stdDeviation="0.9"/></filter></defs><rect x="52.2" y="446.5" width="8.6" height="64.5" fill="url(#bg1)" filter="url(#bl1)"/></g></svg>
<div class="r" style="left:19.8px;top:683px;width:54.80px;height:36.80px;background:#e6e6e6;"></div>
<div class="r" style="left:79.3px;top:683px;width:54.80px;height:36.80px;background:#e6e6e6;"></div>
<div class="r" style="left:138.8px;top:683px;width:54.80px;height:36.80px;background:#e6e6e6;"></div>
<div class="r" style="left:198.3px;top:683px;width:54.80px;height:36.80px;background:#e6e6e6;"></div>
<div class="r" style="left:257.8px;top:683px;width:54.80px;height:36.80px;background:#e6e6e6;"></div>
<div class="r" style="left:317.3px;top:683px;width:54.80px;height:36.80px;background:#e6e6e6;"></div>
<div class="r" style="left:376.8px;top:683px;width:54.80px;height:36.80px;background:#e6e6e6;"></div>
<div class="r" style="left:436.3px;top:683px;width:54.80px;height:36.80px;background:#e6e6e6;"></div>
<div class="r" style="left:495.8px;top:683px;width:54.80px;height:36.80px;background:#e6e6e6;"></div>
<div class="t" style="left:32.37px;top:689.00px;font-size:27.33px;transform:scaleX(0.4300);color:#777777;">-3000</div>
<div class="t" style="left:91.87px;top:689.00px;font-size:27.33px;transform:scaleX(0.4300);color:#777777;">-1000</div>
<div class="t" style="left:154.64px;top:689.00px;font-size:27.33px;transform:scaleX(0.4300);color:#777777;">-300</div>
<div class="t" style="left:214.14px;top:689.00px;font-size:27.33px;transform:scaleX(0.4300);color:#777777;">-100</div>
<div class="t" style="left:282.13px;top:689.00px;font-size:27.33px;transform:scaleX(0.4300);color:#777777;">0</div>
<div class="t" style="left:331.67px;top:689.00px;font-size:27.33px;transform:scaleX(0.4300);color:#777777;">+100</div>
<div class="t" style="left:391.17px;top:689.00px;font-size:27.33px;transform:scaleX(0.4300);color:#777777;">+300</div>
<div class="t" style="left:447.40px;top:689.00px;font-size:27.33px;transform:scaleX(0.4300);color:#777777;">+1000</div>
<div class="t" style="left:506.90px;top:689.00px;font-size:27.33px;transform:scaleX(0.4300);color:#777777;">+3000</div>
<div class="t" style="left:646.80px;top:70.00px;font-size:22.38px;transform:scaleX(0.4293);color:#777777;">RX Control</div>
<div class="t" style="left:574.40px;top:102.00px;font-size:16.57px;transform:scaleX(0.4172);color:#777777;">Audio:</div>
<div class="r" style="left:601.2px;top:97.6px;width:100.60px;height:21.90px;background:#e5e5e5;border-radius:2px;"></div>
<div class="t" style="left:603.40px;top:102.00px;font-size:16.86px;transform:scaleX(0.4088);color:#6c6c6c;">Headphones (Senary Audio)</div>
<svg class="r" style="left:0;top:0" width="768" height="768"><polygon fill="#3a3a3a" points="694.0,104.2 699.0,104.2 696.5,112.6"/></svg>
<div class="t" style="left:707.40px;top:102.00px;font-size:16.86px;transform:scaleX(0.4710);color:#777777;">Out</div>
<div class="r" style="left:574.2px;top:126.8px;width:7.10px;height:17.40px;background:#e4e4e4;border-radius:1px;"></div>
<div class="t" style="left:584.40px;top:128.00px;font-size:15.99px;transform:scaleX(0.4625);color:#777777;">Mute output audio</div>
<div class="t" style="left:574.40px;top:156.00px;font-size:16.57px;transform:scaleX(0.3703);color:#777777;">AGC:</div>
<div class="r" style="left:595.7px;top:151.0px;width:54.30px;height:22.70px;background:#e5e5e5;border-radius:2px;"></div>
<div class="t" style="left:598.00px;top:156.00px;font-size:16.57px;transform:scaleX(0.4157);color:#6c6c6c;">slow_attack</div>
<svg class="r" style="left:0;top:0" width="768" height="768"><polygon fill="#3a3a3a" points="642.0,157.6 647.0,157.6 644.5,166.0"/></svg>
<div class="t" style="left:655.00px;top:156.00px;font-size:16.57px;transform:scaleX(0.4392);color:#777777;">mode</div>
<div class="t" style="left:574.20px;top:182.00px;font-size:16.28px;transform:scaleX(0.3907);color:#c6c6c6;">Gain:</div>
<div class="r" style="left:595.0px;top:184.60000000000002px;width:53.00px;height:10.40px;background:#e8e8e8;border-radius:5px;"></div>
<div class="r" style="left:639.50px;top:180.20px;width:7px;height:19.2px;border:2px solid #d0d0d0;border-radius:3.5px;background:#f3f3f3"></div>
<div class="t" style="left:654.60px;top:182.00px;font-size:16.28px;transform:scaleX(0.4420);color:#c6c6c6;">dB</div>
<div class="t" style="left:667.70px;top:182.00px;font-size:16.28px;transform:scaleX(0.4143);color:#c6c6c6;">67</div>
<div class="r" style="left:574.2px;top:208.0px;width:7.10px;height:16.70px;background:#e4e4e4;border-radius:1px;"></div>
<svg class="r" style="left:0;top:0" width="768" height="768"><path d="M574.8 216.5 L576.9 221.5 L580.6 211.2" fill="none" stroke="#5a5a5a" stroke-width="1.2"/></svg>
<div class="t" style="left:584.40px;top:209.00px;font-size:16.28px;transform:scaleX(0.4496);color:#777777;">Doppler correction</div>
<div class="t" style="left:574.40px;top:236.00px;font-size:16.86px;transform:scaleX(0.4251);color:#777777;">Waterfall:</div>
<div class="r" style="left:612.0px;top:231.5px;width:53.60px;height:22.50px;background:#e5e5e5;border-radius:2px;"></div>
<div class="t" style="left:614.40px;top:236.00px;font-size:15.99px;transform:scaleX(0.4738);color:#6c6c6c;">x8</div>
<svg class="r" style="left:0;top:0" width="768" height="768"><polygon fill="#3a3a3a" points="658.2,237.6 663.2,237.6 660.7,246.0"/></svg>
<div class="t" style="left:671.00px;top:236.00px;font-size:16.86px;transform:scaleX(0.4501);color:#777777;">slow</div>
<div class="r" style="left:574.0px;top:260.8px;width:192.50px;height:2.60px;background:#dcdcdc;"></div>
<div class="r" style="left:574.0px;top:263.4px;width:192.50px;height:2.00px;background:#fcfcfc;"></div>
<div class="t" style="left:647.00px;top:272.00px;font-size:22.67px;transform:scaleX(0.4337);color:#777777;">TX Control</div>
<div class="t" style="left:574.40px;top:305.00px;font-size:16.57px;transform:scaleX(0.4172);color:#777777;">Audio:</div>
<div class="r" style="left:600.5px;top:300.6px;width:99.80px;height:22.10px;background:#e5e5e5;border-radius:2px;"></div>
<div class="t" style="left:603.00px;top:305.00px;font-size:16.86px;transform:scaleX(0.4209);color:#6c6c6c;">Microphone (Senary Audio)</div>
<svg class="r" style="left:0;top:0" width="768" height="768"><polygon fill="#3a3a3a" points="692.4,307.2 697.4,307.2 694.9,315.6"/></svg>
<div class="t" style="left:705.20px;top:305.00px;font-size:16.57px;transform:scaleX(0.4052);color:#777777;">In</div>
<div class="r" style="left:574.0px;top:328.2px;width:192.40px;height:22.20px;background:#ffffff;border-radius:10px;"></div>
<div class="r" style="left:574px;top:327.4px;width:9.6px;height:23.4px;border-radius:50%;background:#7ec4f4"></div>
<div class="t" style="left:578.60px;top:330.00px;font-size:18.02px;transform:scaleX(0.3496);color:#4f7e9c;">RMS</div>
<div class="r" style="left:574.2px;top:357.8px;width:7.10px;height:16.60px;background:#e4e4e4;border-radius:1px;"></div>
<div class="t" style="left:584.40px;top:359.00px;font-size:17.73px;transform:scaleX(0.3968);color:#777777;">Test tone 800 Hz</div>
<div class="r" style="left:574.2px;top:385.0px;width:7.10px;height:16.80px;background:#e4e4e4;border-radius:1px;"></div>
<svg class="r" style="left:0;top:0" width="768" height="768"><path d="M574.8 393.5 L576.9 398.6 L580.6 388.2" fill="none" stroke="#5a5a5a" stroke-width="1.2"/></svg>
<div class="t" style="left:584.40px;top:386.00px;font-size:16.28px;transform:scaleX(0.4313);color:#777777;">Voice compressor</div>
<div class="r" style="left:574.2px;top:410.5px;width:7.10px;height:16.50px;background:#e4e4e4;border-radius:1px;"></div>
<div class="t" style="left:584.40px;top:411.00px;font-size:16.28px;transform:scaleX(0.4402);color:#777777;">DX voice filter</div>
<div class="t" style="left:574.40px;top:439.00px;font-size:16.28px;transform:scaleX(0.3804);color:#777777;">Gain:</div>
<div class="r" style="left:595.9px;top:441.1px;width:54.60px;height:10.40px;background:#e5e5e5;border-radius:5px;"></div>
<div class="r" style="left:629.00px;top:436.70px;width:7px;height:19.2px;border:2px solid #8a8a8a;border-radius:3.5px;background:#f3f3f3"></div>
<div class="t" style="left:655.00px;top:439.00px;font-size:16.28px;transform:scaleX(0.4320);color:#777777;">dB</div>
<div class="t" style="left:667.90px;top:439.00px;font-size:16.28px;transform:scaleX(0.3954);color:#777777;">-12</div>
<div class="t" style="left:574.40px;top:465.00px;font-size:16.28px;transform:scaleX(0.3922);color:#777777;">XIT:</div>
<div class="r" style="left:592.0px;top:468.0px;width:54.60px;height:10.40px;background:#e5e5e5;border-radius:5px;"></div>
<div class="r" style="left:615.20px;top:463.60px;width:7px;height:19.2px;border:2px solid #8a8a8a;border-radius:3.5px;background:#f3f3f3"></div>
<div class="t" style="left:651.20px;top:465.00px;font-size:16.28px;transform:scaleX(0.3921);color:#777777;">Hz</div>
<div class="t" style="left:664.20px;top:465.00px;font-size:16.28px;transform:scaleX(0.4419);color:#777777;">0</div>
<div class="r" style="left:574.0px;top:491.6px;width:192.50px;height:3.00px;background:#dcdcdc;"></div>
<div class="r" style="left:574.0px;top:495.6px;width:192.50px;height:3.00px;background:#fcfcfc;"></div>
<div class="r" style="left:573.8px;top:500.4px;width:165.20px;height:76.80px;background:#a3a3a3;border-radius:3px;"></div>
<div class="t" style="left:629.20px;top:524.00px;font-size:32.27px;transform:scaleX(0.3912);color:#555555;-webkit-text-stroke-width:0.15px;">Start PTT</div>
<div class="r" style="left:574.0px;top:584.2px;width:192.50px;height:2.80px;background:#dcdcdc;"></div>
<div class="r" style="left:574.0px;top:587.6px;width:192.50px;height:2.40px;background:#fcfcfc;"></div>
<svg class="r" style="left:0;top:0" width="768" height="768"><polygon fill="#3a3a3a" points="577.4,600.4 580.8,600.4 579.0999999999999,607.2"/></svg>
<div class="t" style="left:584.40px;top:597.00px;font-size:17.15px;transform:scaleX(0.4138);color:#777777;">Advanced Options</div>
<div class="r" style="left:578.0px;top:619.0px;width:1.00px;height:127.70px;background:#d6d6d6;"></div>
<div class="t" style="left:584.40px;top:623.00px;font-size:16.28px;transform:scaleX(0.4358);color:#777777;">Omnirig:</div>
<div class="r" style="left:617.5px;top:620.0px;width:54.70px;height:21.00px;background:#e5e5e5;border-radius:2px;"></div>
<div class="t" style="left:620.20px;top:624.00px;font-size:16.57px;transform:scaleX(0.4239);color:#6c6c6c;">COM13</div>
<svg class="r" style="left:0;top:0" width="768" height="768"><polygon fill="#3a3a3a" points="664.8,625.6 669.8,625.6 667.3,634.0"/></svg>
<div class="t" style="left:677.40px;top:624.00px;font-size:15.70px;transform:scaleX(0.4806);color:#777777;">port</div>
<div class="t" style="left:584.40px;top:650.00px;font-size:16.28px;transform:scaleX(0.4225);color:#777777;">Pluto IP:</div>
<div class="r" style="left:616.0px;top:646.5px;width:150.40px;height:22.90px;background:#ffffff;border-radius:2px;"></div>
<div class="t" style="left:619.40px;top:650.00px;font-size:16.28px;transform:scaleX(0.4313);color:#6c6c6c;">192.168.5.10</div>
<div class="t" style="left:584.40px;top:679.00px;font-size:16.28px;transform:scaleX(0.4034);color:#777777;">USB PTT Relay address: USBRelay4</div>
<div class="t" style="left:584.40px;top:706.00px;font-size:16.28px;transform:scaleX(0.4000);color:#777777;">COM:</div>
<div class="r" style="left:607.6px;top:702.4px;width:54.70px;height:22.20px;background:#e5e5e5;border-radius:2px;"></div>
<div class="t" style="left:610.20px;top:706.00px;font-size:16.28px;transform:scaleX(0.4315);color:#6c6c6c;">COM14</div>
<svg class="r" style="left:0;top:0" width="768" height="768"><polygon fill="#3a3a3a" points="654.2,708.4 659.2,708.4 656.7,716.8"/></svg>
<div class="t" style="left:667.20px;top:706.00px;font-size:16.28px;transform:scaleX(0.4315);color:#777777;">PTT port</div>
<div class="t" style="left:584.40px;top:732.00px;font-size:16.28px;transform:scaleX(0.4290);color:#777777;">Audio:</div>
<div class="r" style="left:610.0px;top:729.3px;width:122.00px;height:21.30px;background:#e5e5e5;border-radius:2px;"></div>
<div class="t" style="left:612.20px;top:733.00px;font-size:16.57px;transform:scaleX(0.4158);color:#6c6c6c;">CABLE-A Input (VB-Audio Cable A)</div>
<svg class="r" style="left:0;top:0" width="768" height="768"><polygon fill="#3a3a3a" points="723.2,735.2 728.2,735.2 725.7,743.6"/></svg>
<div class="t" style="left:735.00px;top:732.00px;font-size:16.28px;transform:scaleX(0.4536);color:#777777;">keepalive</div>
</div></body></html>
